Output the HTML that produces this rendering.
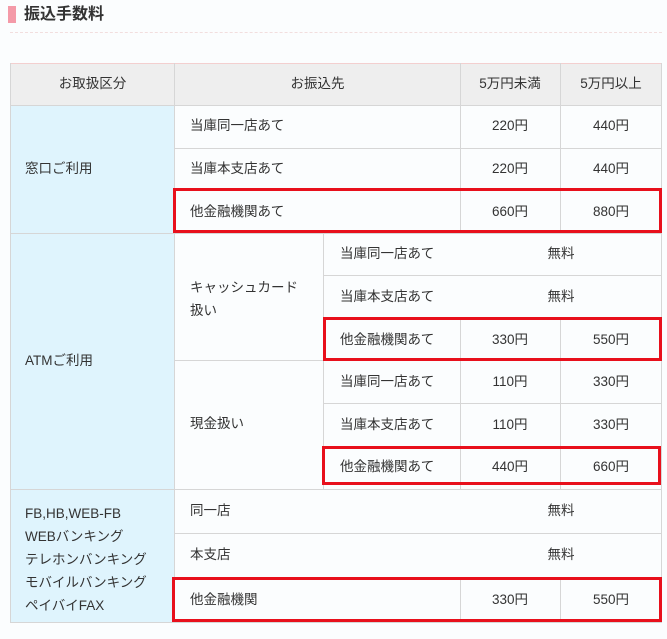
<!DOCTYPE html>
<html><head><meta charset="utf-8"><style>
body{margin:0;width:667px;height:639px;background:#fbfdfe;position:relative;overflow:hidden;font-family:"Liberation Sans","Noto Sans CJK JP",sans-serif;font-size:13.5px;color:#333}
div{position:absolute;box-sizing:border-box}
.h{height:1px;background:#d6d6d6}
.v{width:1px;background:#d6d6d6}
.t{white-space:nowrap;line-height:16px}
.c{text-align:center}
.r{border:3px solid #e8101c}
</style></head><body>
<div style="left:8px;top:6px;width:8px;height:17px;background:#f49aa8"></div>
<div class="t" style="left:24px;top:5px;font-size:16px;font-weight:bold;line-height:20px;color:#333">振込手数料</div>
<div style="left:10px;top:32px;width:652px;border-top:1px dashed #f2dede"></div>

<div style="left:10px;top:63px;width:652px;height:42px;background:#eeeeee"></div>
<div style="left:10px;top:105px;width:165px;height:518px;background:#dff4fd"></div>

<div class="h" style="left:10px;top:63px;width:652px;background:#f3cfcf"></div>
<div class="h" style="left:10px;top:105px;width:652px"></div>
<div class="h" style="left:175px;top:148px;width:487px"></div>
<div class="h" style="left:175px;top:190px;width:487px"></div>
<div class="h" style="left:10px;top:233px;width:652px"></div>
<div class="h" style="left:323px;top:275px;width:339px"></div>
<div class="h" style="left:323px;top:318px;width:339px"></div>
<div class="h" style="left:175px;top:360px;width:487px"></div>
<div class="h" style="left:323px;top:403px;width:339px"></div>
<div class="h" style="left:323px;top:446px;width:339px"></div>
<div class="h" style="left:10px;top:489px;width:652px"></div>
<div class="h" style="left:175px;top:533px;width:487px"></div>
<div class="h" style="left:175px;top:577px;width:487px"></div>
<div class="h" style="left:10px;top:622px;width:652px"></div>

<div class="v" style="left:10px;top:63px;height:560px"></div>
<div class="v" style="left:174px;top:63px;height:560px"></div>
<div class="v" style="left:323px;top:233px;height:256px"></div>
<div class="v" style="left:460px;top:63px;height:170px"></div>
<div class="v" style="left:460px;top:318px;height:42px"></div>
<div class="v" style="left:460px;top:360px;height:129px"></div>
<div class="v" style="left:460px;top:577px;height:45px"></div>
<div class="v" style="left:560px;top:63px;height:170px"></div>
<div class="v" style="left:560px;top:318px;height:42px"></div>
<div class="v" style="left:560px;top:360px;height:129px"></div>
<div class="v" style="left:560px;top:577px;height:45px"></div>
<div class="v" style="left:661px;top:63px;height:560px"></div>

<div class="t c" style="left:10px;width:165px;top:76px">お取扱区分</div>
<div class="t c" style="left:175px;width:285px;top:76px">お振込先</div>
<div class="t c" style="left:460px;width:100px;top:76px">5万円未満</div>
<div class="t c" style="left:560px;width:102px;top:76px">5万円以上</div>

<div class="t" style="left:25px;top:161px">窓口ご利用</div>
<div class="t" style="left:190px;top:118px">当庫同一店あて</div>
<div class="t c" style="left:460px;width:100px;top:118px">220円</div>
<div class="t c" style="left:560px;width:102px;top:118px">440円</div>
<div class="t" style="left:190px;top:161px">当庫本支店あて</div>
<div class="t c" style="left:460px;width:100px;top:161px">220円</div>
<div class="t c" style="left:560px;width:102px;top:161px">440円</div>
<div class="t" style="left:190px;top:204px">他金融機関あて</div>
<div class="t c" style="left:460px;width:100px;top:204px">660円</div>
<div class="t c" style="left:560px;width:102px;top:204px">880円</div>

<div class="t" style="left:25px;top:353px">ATMご利用</div>
<div class="t" style="left:190px;top:276px;line-height:23px">キャッシュカード<br>扱い</div>
<div class="t" style="left:340px;top:246px">当庫同一店あて</div>
<div class="t c" style="left:460px;width:202px;top:246px">無料</div>
<div class="t" style="left:340px;top:289px">当庫本支店あて</div>
<div class="t c" style="left:460px;width:202px;top:289px">無料</div>
<div class="t" style="left:340px;top:332px">他金融機関あて</div>
<div class="t c" style="left:460px;width:100px;top:332px">330円</div>
<div class="t c" style="left:560px;width:102px;top:332px">550円</div>
<div class="t" style="left:190px;top:416px">現金扱い</div>
<div class="t" style="left:340px;top:374px">当庫同一店あて</div>
<div class="t c" style="left:460px;width:100px;top:374px">110円</div>
<div class="t c" style="left:560px;width:102px;top:374px">330円</div>
<div class="t" style="left:340px;top:417px">当庫本支店あて</div>
<div class="t c" style="left:460px;width:100px;top:417px">110円</div>
<div class="t c" style="left:560px;width:102px;top:417px">330円</div>
<div class="t" style="left:340px;top:459px">他金融機関あて</div>
<div class="t c" style="left:460px;width:100px;top:459px">440円</div>
<div class="t c" style="left:560px;width:102px;top:459px">660円</div>

<div class="t" style="left:25px;top:502px;line-height:23px">FB,HB,WEB-FB<br>WEBバンキング<br>テレホンバンキング<br>モバイルバンキング<br>ペイバイFAX</div>
<div class="t" style="left:190px;top:503px">同一店</div>
<div class="t c" style="left:460px;width:202px;top:503px">無料</div>
<div class="t" style="left:190px;top:547px">本支店</div>
<div class="t c" style="left:460px;width:202px;top:547px">無料</div>
<div class="t" style="left:190px;top:592px">他金融機関</div>
<div class="t c" style="left:460px;width:100px;top:592px">330円</div>
<div class="t c" style="left:560px;width:102px;top:592px">550円</div>

<div class="r" style="left:173px;top:188px;width:489px;height:45px"></div>
<div class="r" style="left:323px;top:317px;width:339px;height:44px"></div>
<div class="r" style="left:322px;top:446px;width:339px;height:39px"></div>
<div class="r" style="left:172px;top:577px;width:490px;height:45px"></div>
</body></html>
